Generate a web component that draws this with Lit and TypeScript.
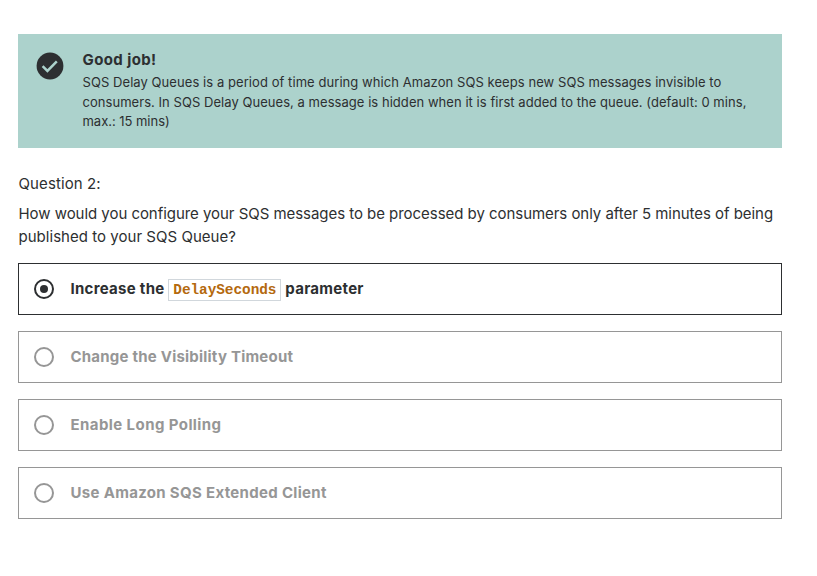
import { LitElement, html, css, svg } from "lit";
import { customElement, state } from "lit/decorators.js";

@customElement("quiz-feedback")
class QuizFeedback extends LitElement {
  static styles = css`
    :host { display: flex; height: 114px; box-sizing: border-box; padding: 16px 18px; background: #acd2cc; color: #2d2f31; }
    svg { width: 28px; height: 28px; margin: 2px 18.5px 0 0; flex: none; }
    .title { width: max-content; font-weight: 700; font-size: 15px; line-height: 20px; letter-spacing: 0.4px; }
    .body { padding-top: 3px; }
    .line { display: block; width: max-content; font-size: 13px; line-height: 19.6px; letter-spacing: 0.065px; white-space: nowrap; }
    .line.mid { letter-spacing: 0.045px; }
    .line.last { letter-spacing: -0.03px; }
  `;
  render() {
    return html`
      <svg viewBox="0 0 28 28"><circle cx="14" cy="14" r="13.4" fill="#2d2f31"/><path d="M6.6 14.1l4.8 4.8 9.4-9.6" fill="none" stroke="#acd2cc" stroke-width="2.5"/></svg>
      <div>
        <div class="title">Good job!</div>
        <div class="body">
          <span class="line">SQS Delay Queues is a period of time during which Amazon SQS keeps new SQS messages invisible to</span>
          <span class="line mid">consumers. In SQS Delay Queues, a message is hidden when it is first added to the queue. (default: 0 mins,</span>
          <span class="line last">max.: 15 mins)</span>
        </div>
      </div>`;
  }
}

@customElement("app-root")
class AppRoot extends LitElement {
  static styles = css`
    :host { display: block; box-sizing: border-box; height: 576px; padding: 34px 35px 0 18px; background: #fff; color: #2d2f31; font-family: Inter, "Liberation Sans", sans-serif; }
    .number, .prompt { width: max-content; padding-left: 0.5px; font-size: 15px; white-space: nowrap; }
    .number { margin-top: 25px; line-height: 22px; letter-spacing: 0.1px; }
    .question { margin: 7px 0 15px; line-height: 23px; }
    .prompt.first { letter-spacing: -0.043px; }
    .prompt.second { letter-spacing: 0.03px; }
    .answers { display: flex; flex-direction: column; gap: 16px; }
    .answer { display: flex; align-items: center; box-sizing: border-box; height: 52px; border: 1px solid #969696; padding-left: 15px; color: #969696; font-size: 15px; font-weight: 700; letter-spacing: 0.28px; }
    .answer.on { border-color: #2d2f31; color: #2d2f31; }
    .answer svg { width: 20px; height: 20px; margin-right: 16.5px; }
    .label { padding-bottom: 2px; white-space: nowrap; }
    .timeout { letter-spacing: 0.22px; }
    .polling { letter-spacing: 0.42px; }
    .client { letter-spacing: 0.32px; }
    code { font: 700 14.4px "Liberation Mono", monospace; letter-spacing: -0.04px; color: #b4690e; border: 1px solid #d1d7dc; padding: 2px 4px; }
  `;
  @state() selected = 0;
  options = [
    { name: "delay", text: html`Increase the <code>DelaySeconds</code> parameter` },
    { name: "timeout", text: "Change the Visibility Timeout" },
    { name: "polling", text: "Enable Long Polling" },
    { name: "client", text: "Use Amazon SQS Extended Client" },
  ];
  render() {
    return html`
      <quiz-feedback></quiz-feedback>
      <div class="number">Question 2:</div>
      <div class="question">
        <div class="prompt first">How would you configure your SQS messages to be processed by consumers only after 5 minutes of being</div>
        <div class="prompt second">published to your SQS Queue?</div>
      </div>
      <div class="answers">
        ${this.options.map((o, i) => html`<div class="answer ${i === this.selected ? "on" : ""}" @click=${() => (this.selected = i)}>
          <svg viewBox="0 0 20 20"><circle cx="10" cy="10" r="9" fill="none" stroke="currentColor" stroke-width="2"/>${i === this.selected ? svg`<circle cx="10" cy="10" r="4" fill="currentColor"/>` : ""}</svg>
          <span class="label ${o.name}">${o.text}</span>
        </div>`)}
      </div>`;
  }
}
